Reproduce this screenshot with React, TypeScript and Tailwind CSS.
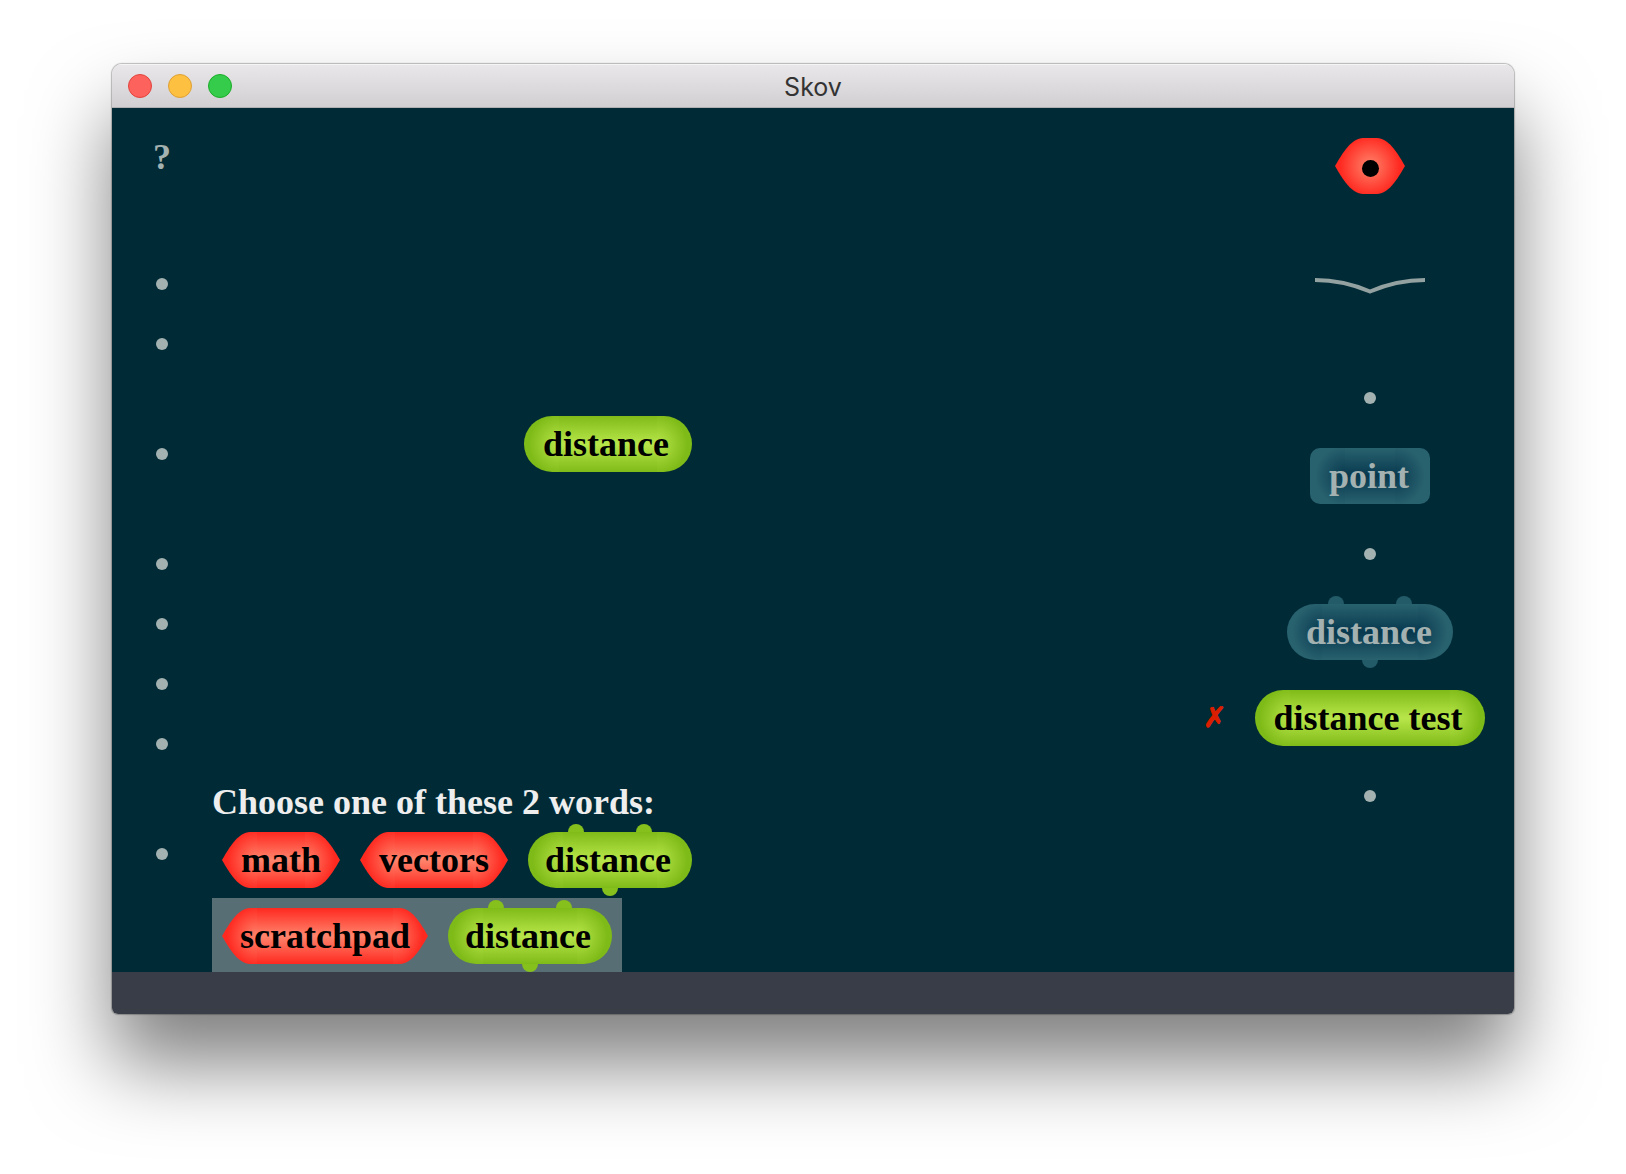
import React from 'react';

type Tone = 'green' | 'blue';

const capsule: Record<Tone, string> = {
  green:
    'text-black bg-no-repeat bg-[image:radial-gradient(circle_at_100%_50%,#b8e64a_0,#7fbb18_30px),radial-gradient(circle_at_0%_50%,#b8e64a_0,#7fbb18_30px),linear-gradient(#7fbb18,#b8e64a,#7fbb18)] bg-[size:35px_100%,35px_100%,100%_100%] bg-[position:left,right,center]',
  blue:
    'text-[#a3b1b1] bg-no-repeat bg-[image:radial-gradient(circle_at_100%_50%,#07384e_0,#29626f_30px),radial-gradient(circle_at_0%_50%,#07384e_0,#29626f_30px),linear-gradient(#29626f,#07384e,#29626f)] bg-[size:35px_100%,35px_100%,100%_100%] bg-[position:left,right,center]',
};

const knob: Record<Tone, string> = {
  green: 'bg-[#86c01d]',
  blue: 'bg-[#235b69]',
};

function Knobs({ tone }: { tone: Tone }) {
  return (
    <>
      <span className="absolute inset-x-0 -top-2 flex h-2 justify-center gap-[52px]">
        <span className={`h-2 w-4 rounded-t-full ${knob[tone]}`} />
        <span className={`h-2 w-4 rounded-t-full ${knob[tone]}`} />
      </span>
      <span className="absolute inset-x-0 -bottom-2 flex h-2 justify-center">
        <span className={`h-2 w-4 rounded-b-full ${knob[tone]}`} />
      </span>
    </>
  );
}

function Word({
  children,
  tone = 'green',
  knobs = false,
  square = false,
  pad = 'pl-[19px] pr-[21px]',
}: {
  children: React.ReactNode;
  tone?: Tone;
  knobs?: boolean;
  square?: boolean;
  pad?: string;
}) {
  return (
    <button
      type="button"
      className={`relative flex h-14 items-center whitespace-nowrap ${pad} ${
        square ? 'rounded-[10px]' : 'rounded-full'
      } ${capsule[tone]}`}
    >
      {knobs && <Knobs tone={tone} />}
      {children}
    </button>
  );
}

function VocabCap({ id, flip = false }: { id: string; flip?: boolean }) {
  return (
    <svg width="35" height="56" viewBox="0 0 35 56" aria-hidden="true" className={flip ? 'shrink-0 -scale-x-100' : 'shrink-0'}>
      <defs>
        <radialGradient id={id} gradientUnits="userSpaceOnUse" cx="35" cy="28" r="30">
          <stop offset="0" stopColor="#ff846c" />
          <stop offset="1" stopColor="#ff2920" />
        </radialGradient>
      </defs>
      <path d="M0 28 C8 14 17 0 28 0 H35 V56 H28 C17 56 8 42 0 28 Z" fill={`url(#${id})`} />
    </svg>
  );
}

function Vocab({ name, pad = 'px-[18px]', children }: { name: string; pad?: string; children?: React.ReactNode }) {
  return (
    <button type="button" aria-label={name} className={`relative flex h-14 min-w-[70px] items-center justify-center text-black ${pad}`}>
      <span className="absolute inset-0 flex">
        <VocabCap id={`cap-left-${name}`} />
        <span className="flex-1 bg-linear-[#ff2920,#ff846c,#ff2920]" />
        <VocabCap id={`cap-right-${name}`} flip />
      </span>
      <span className="relative">{children}</span>
    </button>
  );
}

function Dot({ label, tall = false }: { label: string; tall?: boolean }) {
  return (
    <button type="button" aria-label={label} className={`flex w-15 items-center justify-center ${tall ? 'h-25' : 'h-15'}`}>
      <span className="size-3 rounded-full bg-[#a3b1b1]" />
    </button>
  );
}

const dotGroups = [
  ['Vocabulary', 'Word'],
  ['Constructor'],
  ['Input', 'Output', 'Text', 'Number'],
  ['Run'],
];

export default function App() {
  return (
    <div className="flex min-h-screen flex-col bg-white px-28 pt-16 pb-40 font-['Liberation_Serif',serif] text-[36px] leading-10 font-bold">
      <div className="flex flex-1 flex-col overflow-hidden rounded-t-[10px] rounded-b-md shadow-[0_0_1px_1px_rgba(0,0,0,0.25),0_50px_80px_rgba(0,0,0,0.5)]">
        <header className="grid h-11 grid-cols-[1fr_auto_1fr] items-center border-t border-b border-t-[#f6f5f6] border-b-[#b1afb1] bg-linear-to-b from-[#e9e7e9] to-[#d1cfd1] px-4">
          <div className="flex gap-4">
            <button type="button" aria-label="Close" className="size-6 rounded-full border border-[#e0443e] bg-[#fe625c]" />
            <button type="button" aria-label="Minimize" className="size-6 rounded-full border border-[#dea035] bg-[#fec041]" />
            <button type="button" aria-label="Zoom" className="size-6 rounded-full border border-[#1dad2b] bg-[#35cb4b]" />
          </div>
          <h1 className="pt-0.5 font-['Inter',sans-serif] text-[25px] leading-8 font-normal text-[#333]">Skov</h1>
        </header>

        <main className="flex flex-1 bg-[#002b36]">
          <nav className="flex w-25 shrink-0 flex-col items-center gap-12">
            <button type="button" aria-label="Help" className="flex h-[98px] w-15 items-center justify-center text-[#a3b1b1]">
              ?
            </button>
            <div className="flex flex-col gap-[50px]">
              {dotGroups.map((group) => (
                <div key={group[0]}>
                  {group.map((label) => (
                    <Dot key={label} label={label} />
                  ))}
                </div>
              ))}
            </div>
          </nav>

          <section className="flex flex-1 flex-col items-start justify-between">
            <div className="pt-[308px] pl-[312px]">
              <Word pad="pl-[19px] pr-[23px]">distance</Word>
            </div>
            <div>
              <h2 className="text-[#eeeeee]">Choose one of these 2 words:</h2>
              <div className="flex w-fit gap-5 p-2.5">
                <Vocab name="math" pad="px-[19px]">math</Vocab>
                <Vocab name="vectors" pad="px-[19px]">vectors</Vocab>
                <Word knobs pad="pl-[17px] pr-[21px]">distance</Word>
              </div>
              <div className="flex w-fit gap-5 bg-[#586e75] p-2.5 pb-2">
                <Vocab name="scratchpad">scratchpad</Vocab>
                <Word knobs pad="pl-[17px] pr-[21px]">distance</Word>
              </div>
            </div>
          </section>

          <aside className="flex w-72 shrink-0 flex-col items-center pt-[30px]">
            <Vocab name="root">
              <span className="mt-1 block size-[17px] rounded-full bg-black" />
            </Vocab>
            <svg width="110" height="28" viewBox="0 0 110 28" aria-hidden="true" className="mt-[78px] mb-12">
              <path d="M0 8 Q28 8 55 19.5 Q82 8 110 8" fill="none" stroke="#93a1a1" strokeWidth="4" />
            </svg>
            <Dot label="Add before point" tall />
            <Word tone="blue" square>point</Word>
            <Dot label="Add after point" tall />
            <Word tone="blue" knobs>distance</Word>
            <div className="relative mt-[30px]">
              <span className="absolute top-2 right-full mr-7 font-['DejaVu_Sans',sans-serif] text-[28px] text-[#dc1e00] [-webkit-text-stroke:1px_#dc1e00]">✗</span>
              <Word pad="pl-[19px] pr-[23px]">distance test</Word>
            </div>
            <Dot label="Add after test" tall />
          </aside>
        </main>

        <footer className="h-[42px] bg-[#383d47]" />
      </div>
    </div>
  );
}
